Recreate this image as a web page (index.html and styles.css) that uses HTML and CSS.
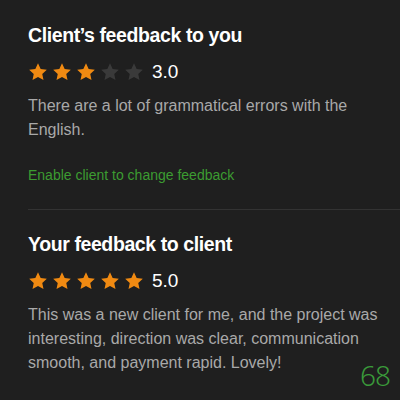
FILE: index.html
```html
<!DOCTYPE html>
<html lang="en">
<head>
  <meta charset="UTF-8" />
  <title>Feedback</title>
  <link rel="stylesheet" href="styles.css">
</head>
<body>
  <div class="panel">
    <section class="feedback">
      <h2>Client’s feedback to you</h2>
      <div class="rating">
        <div class="stars">
          <svg class="star on" viewBox="0 0 24 24"><path d="M12 1.5l3.2 6.9 7.4.8-5.5 5.1 1.5 7.4L12 17.9l-6.6 3.8 1.5-7.4L1.4 9.2l7.4-.8z"/></svg>
          <svg class="star on" viewBox="0 0 24 24"><path d="M12 1.5l3.2 6.9 7.4.8-5.5 5.1 1.5 7.4L12 17.9l-6.6 3.8 1.5-7.4L1.4 9.2l7.4-.8z"/></svg>
          <svg class="star on" viewBox="0 0 24 24"><path d="M12 1.5l3.2 6.9 7.4.8-5.5 5.1 1.5 7.4L12 17.9l-6.6 3.8 1.5-7.4L1.4 9.2l7.4-.8z"/></svg>
          <svg class="star" viewBox="0 0 24 24"><path d="M12 1.5l3.2 6.9 7.4.8-5.5 5.1 1.5 7.4L12 17.9l-6.6 3.8 1.5-7.4L1.4 9.2l7.4-.8z"/></svg>
          <svg class="star" viewBox="0 0 24 24"><path d="M12 1.5l3.2 6.9 7.4.8-5.5 5.1 1.5 7.4L12 17.9l-6.6 3.8 1.5-7.4L1.4 9.2l7.4-.8z"/></svg>
        </div>
        <span class="score">3.0</span>
      </div>
      <p>There are a lot of grammatical errors with the English.</p>
      <a class="link" href="#">Enable client to change feedback</a>
    </section>

    <section class="feedback second">
      <h2>Your feedback to client</h2>
      <div class="rating">
        <div class="stars">
          <svg class="star on" viewBox="0 0 24 24"><path d="M12 1.5l3.2 6.9 7.4.8-5.5 5.1 1.5 7.4L12 17.9l-6.6 3.8 1.5-7.4L1.4 9.2l7.4-.8z"/></svg>
          <svg class="star on" viewBox="0 0 24 24"><path d="M12 1.5l3.2 6.9 7.4.8-5.5 5.1 1.5 7.4L12 17.9l-6.6 3.8 1.5-7.4L1.4 9.2l7.4-.8z"/></svg>
          <svg class="star on" viewBox="0 0 24 24"><path d="M12 1.5l3.2 6.9 7.4.8-5.5 5.1 1.5 7.4L12 17.9l-6.6 3.8 1.5-7.4L1.4 9.2l7.4-.8z"/></svg>
          <svg class="star on" viewBox="0 0 24 24"><path d="M12 1.5l3.2 6.9 7.4.8-5.5 5.1 1.5 7.4L12 17.9l-6.6 3.8 1.5-7.4L1.4 9.2l7.4-.8z"/></svg>
          <svg class="star on" viewBox="0 0 24 24"><path d="M12 1.5l3.2 6.9 7.4.8-5.5 5.1 1.5 7.4L12 17.9l-6.6 3.8 1.5-7.4L1.4 9.2l7.4-.8z"/></svg>
        </div>
        <span class="score">5.0</span>
      </div>
      <p>This was a new client for me, and the project was interesting, direction was clear, communication smooth, and payment rapid. Lovely!</p>
    </section>

    <span class="count">68</span>
  </div>
</body>
</html>
```

FILE: styles.css
```css
html,
body {
  margin: 0;
  height: 100%;
  background: #1f1f1f;
}

body {
  font-family: 'Liberation Sans', Arial, sans-serif;
  color: #fff;
}

.panel {
  position: relative;
  height: 400px;
  padding: 23px 0 0 28px;
  box-sizing: border-box;
  overflow: hidden;
}

.feedback {
  padding-right: 18px;
}

.feedback.second {
  border-top: 1px solid #333;
  margin-top: 25px;
  padding-top: 22px;
}

h2 {
  margin: 0;
  font-size: 19.5px;
  font-weight: 700;
  line-height: 24px;
  letter-spacing: -0.4px;
}

.rating {
  display: flex;
  align-items: center;
  margin-top: 14px;
}

.stars {
  display: flex;
  gap: 4px;
}

.star {
  width: 20px;
  height: 20px;
  fill: #3a3a3a;
}

.star.on {
  fill: #f08a12;
}

.score {
  margin-left: 8px;
  font-size: 19px;
  line-height: 22px;
}

p {
  margin: 11px 0 0;
  font-size: 16px;
  line-height: 24px;
  color: #a9a9a9;
}

.link {
  display: inline-block;
  margin-top: 24px;
  font-size: 14px;
  line-height: 18px;
  color: #3c9c31;
  text-decoration: none;
}

.count {
  position: absolute;
  right: 10px;
  bottom: 6px;
  font-family: 'Noto Sans', sans-serif;
  font-weight: 300;
  font-size: 28px;
  letter-spacing: -1px;
  color: #3a9a3a;
}
```
